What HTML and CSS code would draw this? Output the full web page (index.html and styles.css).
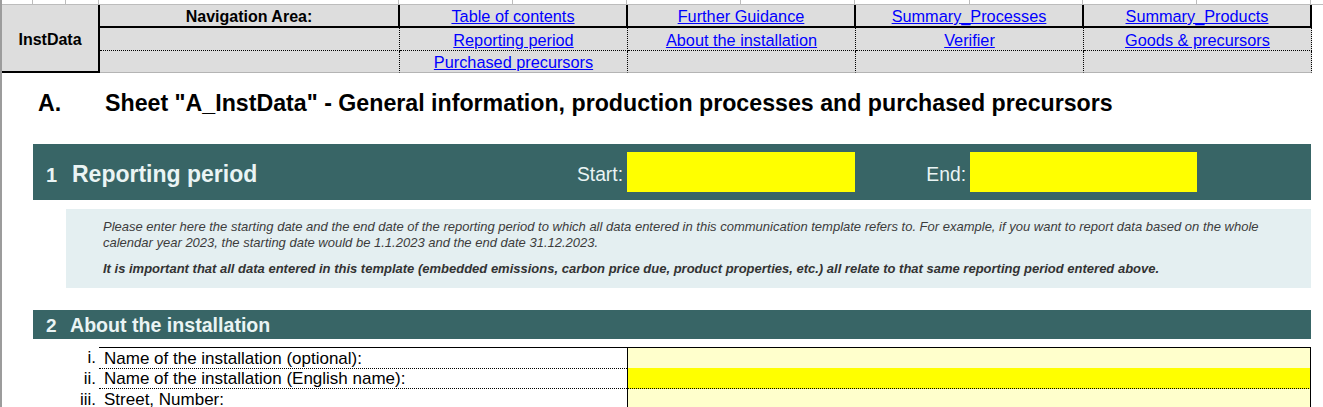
FILE: index.html
```html
<!DOCTYPE html>
<html lang="en">
<head>
<meta charset="utf-8">
<title>A_InstData</title>
<link rel="stylesheet" href="styles.css">
</head>
<body>
<div class="sheet">
  <div class="colstrip">
    <span></span><span></span><span></span><span></span><span></span><span></span>
    <span></span><span></span><span></span><span></span><span></span><span></span>
  </div>

  <div class="nav">
    <div class="cell inst">InstData</div>
    <div class="cell r1 nav-title">Navigation Area:</div>
    <div class="cell r1"><a href="#">Table of contents</a></div>
    <div class="cell r1"><a href="#">Further Guidance</a></div>
    <div class="cell r1"><a href="#">Summary_Processes</a></div>
    <div class="cell r1"><a href="#">Summary_Products</a></div>

    <div class="cell r2"></div>
    <div class="cell r2"><a href="#">Reporting period</a></div>
    <div class="cell r2"><a href="#">About the installation</a></div>
    <div class="cell r2"><a href="#">Verifier</a></div>
    <div class="cell r2"><a href="#">Goods &amp; precursors</a></div>

    <div class="cell r3"></div>
    <div class="cell r3"><a href="#">Purchased precursors</a></div>
    <div class="cell r3"></div>
    <div class="cell r3"></div>
    <div class="cell r3"></div>
  </div>

  <div class="title">
    <span class="title-num">A.</span>
    <span class="title-text">Sheet "A_InstData" - General information, production processes and purchased precursors</span>
  </div>

  <div class="band band-1">
    <div class="band-title"><span class="band-num">1</span>Reporting period</div>
    <div class="band-label">Start:</div>
    <div class="date-input"></div>
    <div class="band-label">End:</div>
    <div class="date-input"></div>
    <div></div>
  </div>

  <div class="note">
    <p>Please enter here the starting date and the end date of the reporting period to which all data entered in this communication template refers to. For example, if you want to report data based on the whole<br>calendar year 2023, the starting date would be 1.1.2023 and the end date 31.12.2023.</p>
    <p class="note-strong">It is important that all data entered in this template (embedded emissions, carbon price due, product properties, etc.) all relate to that same reporting period entered above.</p>
  </div>

  <div class="band band-2">
    <div class="band-title small"><span class="band-num">2</span>About the installation</div>
  </div>

  <div class="form">
    <div class="num">i.</div>
    <div class="label first">Name of the installation (optional):</div>
    <div class="value first light"></div>

    <div class="num">ii.</div>
    <div class="label">Name of the installation (English name):</div>
    <div class="value strong"></div>

    <div class="num">iii.</div>
    <div class="label">Street, Number:</div>
    <div class="value light"></div>
  </div>
</div>
</body>
</html>
```

FILE: styles.css
```css
* { box-sizing: border-box; }

html, body {
  margin: 0;
  padding: 0;
  background: #ffffff;
}

body {
  font-family: "Liberation Sans", Arial, sans-serif;
  color: #000;
  width: 1323px;
  height: 407px;
  overflow: hidden;
}

.sheet {
  border-left: 2px solid #9c9c9c;
  min-height: 407px;
}

/* top strip of the grid */
.colstrip {
  display: grid;
  grid-template-columns: 31px 33px 33px 300px 114px 114px 114px 114px 115px 113px 114px 114px;
  height: 5px;
  border-bottom: 1px solid #bcbcbc;
}
.colstrip span {
  border-right: 1px solid #bcbcbc;
}

/* navigation area */
.nav {
  display: grid;
  grid-template-columns: 98px 300px 228px 228px 228px 228px;
  grid-template-rows: 23px 23px 22px;
  width: 1310px;
}

.cell {
  background: #dddddd;
  display: flex;
  align-items: center;
  justify-content: center;
  font-size: 16.3px;
  white-space: nowrap;
  padding-top: 2px;
}

.cell a {
  color: #0000ff;
  text-decoration: underline;
}

.inst {
  grid-row: 1 / 4;
  font-weight: bold;
  font-size: 16px;
  border-right: 2px solid #000;
  border-bottom: 2px solid #000;
  padding-top: 4px;
}

.nav-title {
  font-weight: bold;
  font-size: 16px;
}

.r1 {
  border-right: 2px solid #000;
  border-bottom: 2px solid #000;
}

.r2 {
  border-right: 1px dotted #000;
  border-bottom: 1px dotted #000;
}

.r3 {
  border-right: 1px dotted #000;
  border-bottom: 1px solid #b4b4b4;
}

/* sheet title */
.title {
  display: flex;
  align-items: flex-start;
  padding: 17px 0 0 36px;
  height: 71px;
  font-size: 23.2px;
  font-weight: bold;
  line-height: 26px;
  white-space: nowrap;
}
.title-num {
  width: 67px;
}

/* teal section bands */
.band {
  margin-left: 31px;
  width: 1278px;
  background: #386566;
  color: #eaf4f4;
}

.band-1 {
  display: grid;
  grid-template-columns: 480px 114px 228px 115px 227px 114px;
  align-items: center;
  height: 56px;
}

.band-title {
  font-weight: bold;
  font-size: 23px;
  padding-left: 13px;
  padding-top: 5px;
  white-space: nowrap;
}

.band-num {
  display: inline-block;
  width: 26px;
  font-size: 20px;
}

.band-label {
  text-align: right;
  font-size: 19.3px;
  padding-right: 4px;
  padding-top: 5px;
}

.date-input {
  height: 40px;
  background: #ffff00;
}

.note {
  margin: 9px 0 0 64px;
  width: 1245px;
  height: 79px;
  background: #e4eff1;
  padding: 10px 0 0 37px;
  font-size: 13px;
  font-style: italic;
  color: #3c3c3c;
  line-height: 16px;
  white-space: nowrap;
}
.note p {
  margin: 0;
}
.note .note-strong {
  margin-top: 10px;
  font-weight: bold;
  color: #333;
}

.band-2 {
  margin-top: 22px;
  height: 29px;
  display: flex;
  align-items: center;
}
.band-title.small {
  font-size: 19.6px;
  padding-top: 2px;
}
.band-2 .band-num {
  width: 24px;
  font-size: 19px;
}

/* form rows */
.form {
  margin-top: 8px;
  display: grid;
  grid-template-columns: 97px 528px 684px;
  grid-auto-rows: 21px;
  font-size: 17px;
  line-height: 20px;
}

.num {
  text-align: right;
  padding-right: 3px;
  padding-top: 1px;
}

.label {
  padding-left: 5px;
  padding-top: 1px;
  border-bottom: 1px dotted #000;
  white-space: nowrap;
}

.value {
  border-left: 1px solid #000;
  border-right: 1px solid #000;
  border-bottom: 1px dotted #000;
}

.first {
  border-top: 1px solid #000;
}
.form .first {
  height: 22px;
}

.light { background: #ffffcc; }
.strong { background: #ffff00; }
```
